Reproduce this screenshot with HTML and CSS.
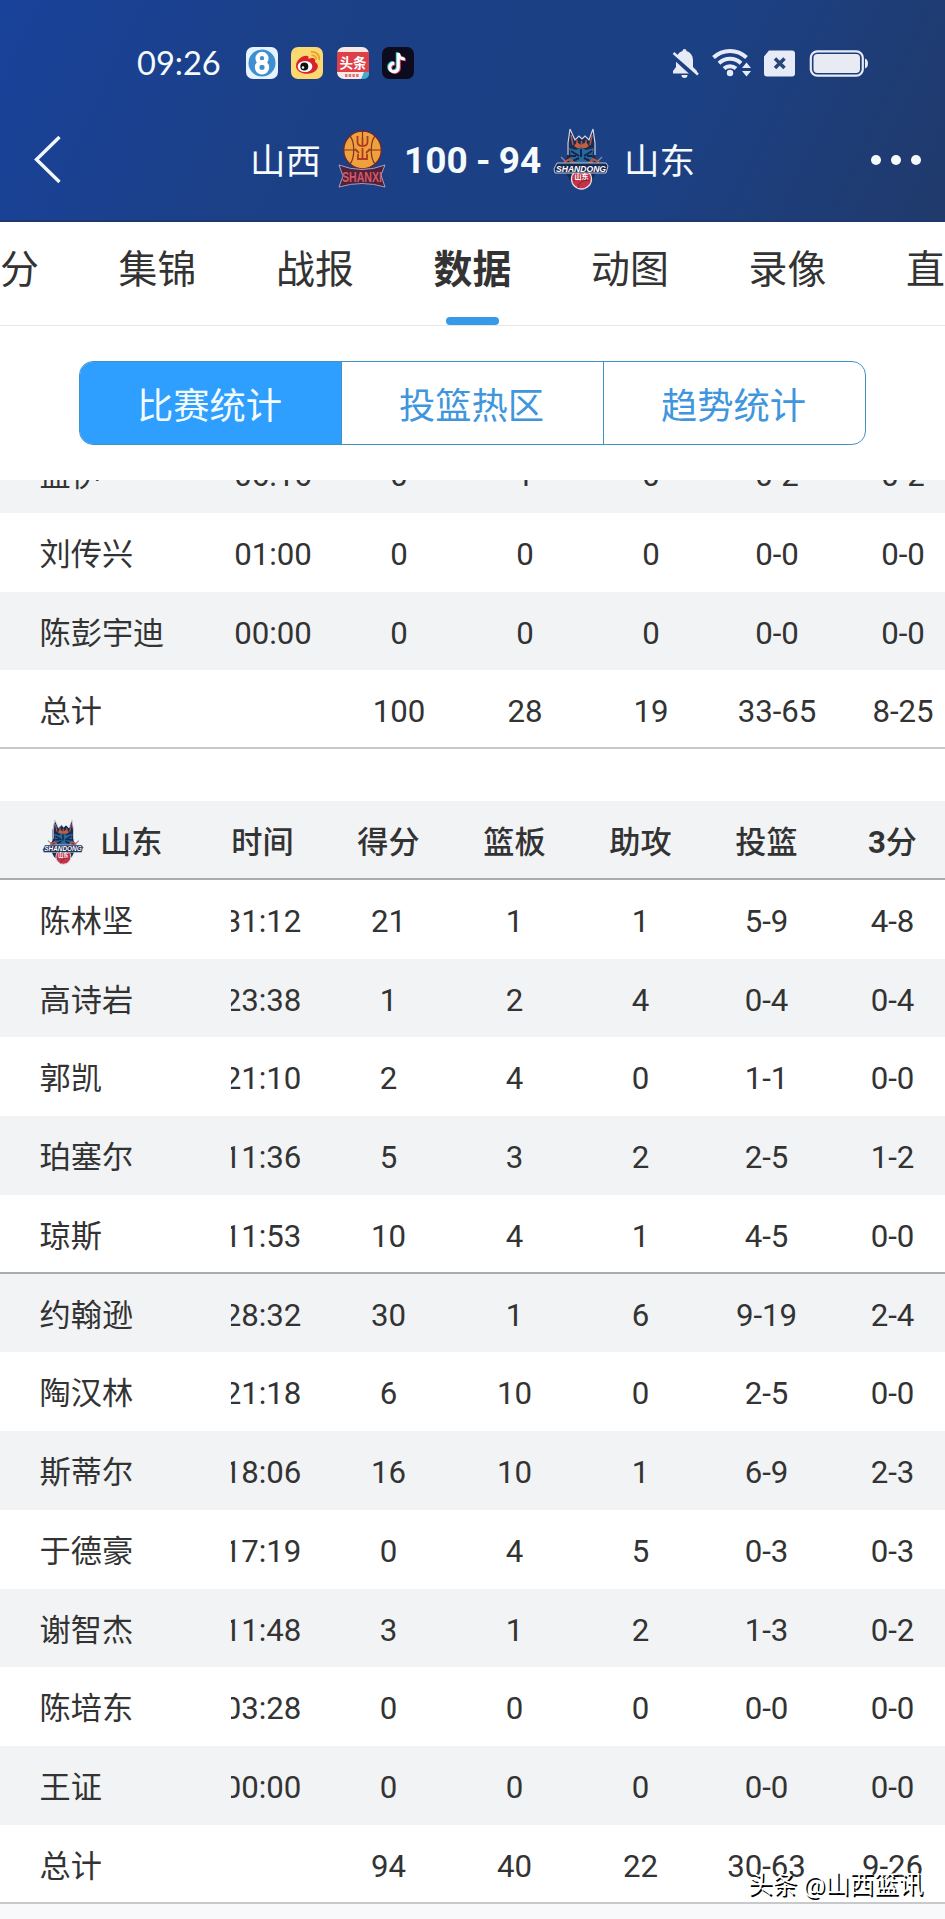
FILE: index.html
```html
<!DOCTYPE html>
<html lang="zh-CN">
<head>
    <meta charset="UTF-8">
    <meta name="viewport" content="width=device-width, initial-scale=1.0">
    <title>山西 100 - 94 山东</title>
    <link rel="stylesheet" href="styles.css">
</head>
<body>
    <!-- shared logo -->
    <svg class="defs" width="0" height="0">
        <symbol id="shandong" viewBox="0 0 56 62">
            <path d="M17 1l5 11 4-4 3 3 3-3 4 4 4-11 2 14v14l4 8-6 14-12 10-12-10-7-14 5-8V15z" fill="#1b2a50"/>
            <path d="M17 1l5 11 4-4 3 3 3-3 4 4 4-11 2 14v12M17 1l-2 14v12" fill="none" stroke="#cfd6ea" stroke-width="1.2"/>
            <path d="M18 7l2 10M39 7l-2 10M24 12v5M33 12v5M28.500 13v4" stroke="#a8584a" stroke-width="1.600"/>
            <path d="M21 18l3-4 4 3 5-3 3 4-3 2h-9z" fill="#c2603c"/>
            <path d="M16 20l7 2 5-3 5 3 8-2-2 9 2 5-6 5H22l-6-5 2-6z" fill="#28699c"/>
            <path d="M18 23l8 5M39 23l-8 5M20 33l6-3M37 33l-6-3M28 21v8M18 28h5M39 28h-5" stroke="#14244c" stroke-width="2"/>
            <path d="M8 29l5 5M49 29l-5 5" fill="none" stroke="#8b86a8" stroke-width="1.4"/>
            <path d="M11 34l6-3 5 5M46 34l-6-3-5 5" fill="none" stroke="#b9573c" stroke-width="2"/>
            <circle cx="28.500" cy="51" r="10" fill="#c53345" stroke="#e6d9e8" stroke-width="1.3"/>
            <path d="M20 53q8-6 17 0M25 60q0-7 10-8" fill="none" stroke="#78233e" stroke-width="1"/>
            <path d="M4 35h49l2 3-2 7H2l-1-4z" fill="#172850" stroke="#e4e9f5" stroke-width=".8"/>
            <text x="28" y="43.500" text-anchor="middle" textLength="50" lengthAdjust="spacingAndGlyphs" class="crest-name">SHANDONG</text>
            <text x="28.500" y="51" text-anchor="middle" class="crest-city">山东</text>
        </symbol>
    </svg>

    <header>
        <div class="status">
            <span class="clock">09:26</span>
            <div class="apps">
                <svg width="32" height="32" viewBox="0 0 32 32">
                    <rect width="32" height="32" rx="7" fill="#e4f3fd"/>
                    <circle cx="16" cy="16" r="13.500" fill="#3f8fd0"/>
                    <circle cx="16" cy="11.300" r="4.400" fill="none" stroke="#fff" stroke-width="4.400"/>
                    <circle cx="16" cy="20.300" r="4.900" fill="none" stroke="#fff" stroke-width="4.600"/>
                </svg>
                <svg width="32" height="32" viewBox="0 0 32 32">
                    <rect width="32" height="32" rx="7" fill="#fbd970"/>
                    <path d="M5 19c0-6 7-11 11-10 2 0 2 2 1 3 5-2 8-1 7 3 4 2 4 7-1 10-7 4-18 1-18-6z" fill="#d9232a"/>
                    <ellipse cx="14" cy="19.500" rx="7.300" ry="5.600" fill="#fff"/>
                    <circle cx="13.300" cy="19.500" r="4" fill="#111"/>
                    <circle cx="12" cy="20.500" r="1.200" fill="#fff"/>
                    <path d="M20 5c5-1 9 3 8 8M20.500 8.500c3-.5 5 1.500 4.500 4" fill="none" stroke="#e9a32c" stroke-width="1.800"/>
                </svg>
                <svg width="32" height="32" viewBox="0 0 32 32">
                    <rect width="32" height="32" rx="7" fill="#f8e9e6"/>
                    <path d="M0 5h32v20H0z" fill="#de4049"/>
                    <path d="M24 32l3-7h5v2a5 5 0 0 1-5 5z" fill="#45a9cc"/>
                    <text x="16" y="20.500" text-anchor="middle" class="toutiao">头条</text>
                    <path d="M8 28.500h14" stroke="#de7771" stroke-width="3" stroke-dasharray="2.500 1.200"/>
                </svg>
                <svg width="32" height="32" viewBox="0 0 32 32">
                    <rect width="32" height="32" rx="7" fill="#0c0c1e"/>
                    <g fill="none" stroke-width="3">
                        <path d="M16.300 6v14.500a4.300 4.300 0 1 1-4-4.300M16.300 6.500c.5 3.500 3 5.500 6.500 5.500" stroke="#39d5d8" transform="translate(-1 -.7)"/>
                        <path d="M16.300 6v14.500a4.300 4.300 0 1 1-4-4.300M16.300 6.500c.5 3.500 3 5.500 6.500 5.500" stroke="#e8436a" transform="translate(1 .7)"/>
                        <path d="M16.300 6v14.500a4.300 4.300 0 1 1-4-4.300M16.300 6.500c.5 3.500 3 5.500 6.500 5.500" stroke="#fff"/>
                    </g>
                </svg>
            </div>
            <svg class="signals" width="200" height="32" viewBox="0 0 200 32">
                <g fill="#e6ebf7">
                    <path d="M3 26.500v-2.500l3-4v-7a9 9 0 0 1 6.500-9 2 2 0 0 1 4 0 9 9 0 0 1 6.500 9v7l4 4v2.500zM11.500 28h6a3 3 0 0 1-6 0z"/>
                    <path d="M1.500 7.500l24 22" stroke="#1c4084" stroke-width="4.500"/>
                    <path d="M3.500 6l24.500 21.500" stroke="#e6ebf7" stroke-width="2.400"/>
                    <circle cx="60" cy="26" r="3.200"/>
                    <path d="M72 21l4.500-5.500 4.500 5.500zM72 24l4.500 5.500 4.500-5.500z"/>
                    <path d="M99 3.500h23a3 3 0 0 1 3 3v20a3 3 0 0 1-3 3H97a3 3 0 0 1-3-3v-17z"/>
                </g>
                <g fill="none" stroke="#e6ebf7">
                    <path d="M43.500 10.500a24 24 0 0 1 33 0M49 16.200a16 16 0 0 1 22 0M54 21.500a9 9 0 0 1 12 0" stroke-width="4"/>
                    <path d="M105 11.500l9.500 9.500M114.500 11.500l-9.500 9.500" stroke="#274577" stroke-width="3.500"/>
                    <rect x="140.800" y="4.300" width="52" height="24.400" rx="6.500" stroke-width="2.200"/>
                </g>
                <rect x="143.500" y="7" width="46.500" height="19" rx="4" fill="#e8ebf3"/>
                <path d="M195 11.500q3 1 3 5t-3 5z" fill="#e6ebf7"/>
            </svg>
        </div>
        <div class="title">
            <svg class="back" width="30" height="50" viewBox="0 0 30 50"><path d="M26.500 2L3.500 24.500l23 22.500" fill="none" stroke="#f2f8fc" stroke-width="3.400"/></svg>
            <div class="match">
                <span>山西</span>
                <svg class="logo-home" width="48" height="58" viewBox="0 0 48 58">
                    <circle cx="24.500" cy="20" r="18.800" fill="#f0a13c" stroke="#6c2634" stroke-width="1.300"/>
                    <path d="M5.500 20h12M31 20h12.500M24.500 1v8M12 6c5 6 5 22 0 28M37 6c-5 6-5 22 0 28" fill="none" stroke="#7b3427" stroke-width="1.200"/>
                    <path d="M19.500 6v6q0 4 5 4t5-4V6M24.500 8v7M17 19l4 4M32 19l-4 4M24.500 18v11M20 24v5h9v-5" fill="none" stroke="#ac3b25" stroke-width="1.800"/>
                    <path d="M1 35q23 9 46 0l-4 10 4 12q-23-7-46 0l4-11z" fill="#51203b" stroke="#c9b6cb" stroke-width=".8"/>
                    <text x="24" y="52" text-anchor="middle" textLength="40" lengthAdjust="spacingAndGlyphs" class="shanxi">SHANXI</text>
                </svg>
                <strong>100 - 94</strong>
                <svg class="logo-away" width="56" height="62"><use href="#shandong"/></svg>
                <span>山东</span>
            </div>
            <div class="more"><i></i><i></i><i></i></div>
        </div>
    </header>

    <nav>
        <a>比分</a>
        <a>集锦</a>
        <a>战报</a>
        <a class="active">数据</a>
        <a>动图</a>
        <a>录像</a>
        <a>直播</a>
    </nav>

    <div class="segment">
        <button class="on">比赛统计</button>
        <button>投篮热区</button>
        <button>趋势统计</button>
    </div>

    <main>
        <section class="team home">
            <div class="row grey"><b>盖伊</b><div><span>06:16</span><span>0</span><span>1</span><span>0</span><span>0-2</span><span>0-2</span></div></div>
            <div class="row"><b>刘传兴</b><div><span>01:00</span><span>0</span><span>0</span><span>0</span><span>0-0</span><span>0-0</span></div></div>
            <div class="row grey"><b>陈彭宇迪</b><div><span>00:00</span><span>0</span><span>0</span><span>0</span><span>0-0</span><span>0-0</span></div></div>
            <div class="row total"><b>总计</b><div><span></span><span>100</span><span>28</span><span>19</span><span>33-65</span><span>8-25</span></div></div>
        </section>

        <section class="team away">
            <div class="row grey head"><b><svg width="42" height="46" viewBox="0 0 56 62" preserveAspectRatio="none"><use href="#shandong"/></svg>山东</b><div><span>时间</span><span>得分</span><span>篮板</span><span>助攻</span><span>投篮</span><span><strong>3</strong>分</span></div></div>
            <div class="row"><b>陈林坚</b><div><span>31:12</span><span>21</span><span>1</span><span>1</span><span>5-9</span><span>4-8</span></div></div>
            <div class="row grey"><b>高诗岩</b><div><span>23:38</span><span>1</span><span>2</span><span>4</span><span>0-4</span><span>0-4</span></div></div>
            <div class="row"><b>郭凯</b><div><span>21:10</span><span>2</span><span>4</span><span>0</span><span>1-1</span><span>0-0</span></div></div>
            <div class="row grey"><b>珀塞尔</b><div><span>11:36</span><span>5</span><span>3</span><span>2</span><span>2-5</span><span>1-2</span></div></div>
            <div class="row starters-end"><b>琼斯</b><div><span>11:53</span><span>10</span><span>4</span><span>1</span><span>4-5</span><span>0-0</span></div></div>
            <div class="row grey"><b>约翰逊</b><div><span>28:32</span><span>30</span><span>1</span><span>6</span><span>9-19</span><span>2-4</span></div></div>
            <div class="row"><b>陶汉林</b><div><span>21:18</span><span>6</span><span>10</span><span>0</span><span>2-5</span><span>0-0</span></div></div>
            <div class="row grey"><b>斯蒂尔</b><div><span>18:06</span><span>16</span><span>10</span><span>1</span><span>6-9</span><span>2-3</span></div></div>
            <div class="row"><b>于德豪</b><div><span>17:19</span><span>0</span><span>4</span><span>5</span><span>0-3</span><span>0-3</span></div></div>
            <div class="row grey"><b>谢智杰</b><div><span>11:48</span><span>3</span><span>1</span><span>2</span><span>1-3</span><span>0-2</span></div></div>
            <div class="row"><b>陈培东</b><div><span>03:28</span><span>0</span><span>0</span><span>0</span><span>0-0</span><span>0-0</span></div></div>
            <div class="row grey"><b>王证</b><div><span>00:00</span><span>0</span><span>0</span><span>0</span><span>0-0</span><span>0-0</span></div></div>
            <div class="row total"><b>总计</b><div><span></span><span>94</span><span>40</span><span>22</span><span>30-63</span><span>9-26</span></div></div>
        </section>
    </main>

    <div class="watermark">头条 @山西篮讯</div>
</body>
</html>
```
FILE: styles.css
```css
* {
    box-sizing: border-box;
}
body {
    position: relative;
    display: flex;
    flex-direction: column;
    height: 1919px;
    margin: 0;
    overflow: hidden;
    background-color: #fff;
    color: #333;
    font-family: Roboto, "Noto Sans CJK SC", sans-serif;
}
.defs {
    position: absolute;
}
header {
    flex: none;
    height: 222px;
    background: linear-gradient(115deg, #19429a 0%, #1c4085 35%, #1c4084 70%, #203a6b 100%);
    border-bottom: 2px solid #1d386c;
    color: #f5fafd;
}

/* phone status bar */
.status {
    display: flex;
    align-items: center;
    height: 126px;
    padding: 0 75px 0 137px;
}
.clock {
    width: 108.5px;
    font-family: Lato, sans-serif;
    font-size: 32.6px;
    line-height: 40px;
}
.apps {
    display: flex;
    gap: 13.6px;
}
.apps svg {
    display: block;
}
.signals {
    margin-left: auto;
}
.toutiao {
    font-family: "Noto Sans CJK SC", sans-serif;
    font-size: 13.5px;
    font-weight: bold;
    fill: #fff;
}

.title {
    display: flex;
    align-items: center;
    height: 68px;
    padding: 0 24px 0 33px;
}
.match {
    display: flex;
    align-items: center;
    margin-left: 187px;
    font-size: 35.5px;
    line-height: 50px;
}
.match span {
    width: 71px;
    padding-top: 3px;
}
.match strong {
    width: 136px;
    padding-top: 2px;
    font-size: 37px;
    word-spacing: -1px;
    white-space: nowrap;
}
.logo-home {
    margin: -2px 18px 0 17px;
}
.logo-away {
    margin: -2px 15px 0 13px;
}
.more {
    display: flex;
    gap: 10px;
    margin-left: auto;
}
.more i {
    width: 10px;
    height: 10px;
    border-radius: 50%;
    background-color: #f5fafd;
}
.shanxi {
    font-family: "Liberation Sans", sans-serif;
    font-size: 15px;
    font-weight: bold;
    fill: #d05a65;
}
.crest-name {
    font-family: "Liberation Sans", sans-serif;
    font-size: 9px;
    font-weight: bold;
    font-style: italic;
    fill: #fff;
}
.crest-city {
    font-family: "Noto Sans CJK SC", sans-serif;
    font-size: 7px;
    font-weight: bold;
    fill: #fff;
}

nav {
    display: flex;
    flex: none;
    height: 104px;
    margin-left: -78.75px;
    border-bottom: 1px solid #e6e6e6;
}
nav a {
    flex: none;
    display: flex;
    flex-direction: column;
    align-items: center;
    width: 157.5px;
    padding-top: 23px;
    font-size: 38.9px;
    line-height: 50px;
}
nav .active {
    font-weight: bold;
}
nav .active::after {
    content: "";
    width: 53px;
    height: 8px;
    margin-top: 22px;
    border-radius: 4px;
    background-color: #359ae8;
}

.segment {
    display: flex;
    flex: none;
    height: 84px;
    margin: 35px 79px;
    border: 1.5px solid #4292c8;
    border-radius: 14px;
    overflow: hidden;
}
.segment button {
    flex: 1;
    padding: 7px 2px 0 0;
    border: 0;
    border-left: 1px solid #4292c8;
    background: none;
    color: #3f96dc;
    font: 36.3px/50px Roboto, "Noto Sans CJK SC", sans-serif;
}
.segment button.on {
    border-left: 0;
    background-color: #2e9eff;
    color: #f2fcff;
}

main {
    flex: 1;
    overflow: hidden;
    background-color: #f7f9fb;
}
.team {
    background-color: #fff;
}
.home {
    margin-top: -46px;
    padding-bottom: 52px;
}
.row {
    display: flex;
    height: 78.75px;
    font-size: 31.2px;
    line-height: 83px;
}
.grey {
    background-color: #f2f3f5;
}
.row b {
    width: 231px;
    padding-left: 39.5px;
    font-weight: normal;
}
.row div {
    display: flex;
    flex: 1;
    overflow: hidden;
}
.row span {
    flex: none;
    width: 126px;
    text-align: center;
}
.home span:first-child {
    margin-left: -21px;
}
.away span:first-child {
    margin-left: -31.5px;
}
.head,
.total,
.starters-end {
    border-bottom: 2px solid #c8c9cb;
}
.head,
.starters-end {
    border-color: #a9abae;
}
.head {
    line-height: 84px;
}
.head b,
.head span {
    font-weight: 500;
}
.head b {
    display: flex;
    align-items: flex-start;
    padding-left: 42px;
}
.head svg {
    margin: 18px 16px 0 0;
}

.watermark {
    position: absolute;
    right: 22px;
    bottom: 16px;
    color: #fff;
    font-size: 24.5px;
    line-height: 36px;
    text-shadow: 1.5px 1.5px 0 #000;
}
```
